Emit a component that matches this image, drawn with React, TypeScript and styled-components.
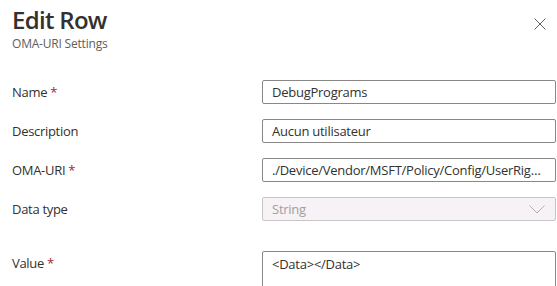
import React from "react"
import styled, { createGlobalStyle } from "styled-components"

const GlobalStyle = createGlobalStyle`
  html, body {
    margin: 0;
    padding: 0;
    background: #ffffff;
    font-family: "Open Sans", "Noto Sans", sans-serif;
    color: #323130;
    overflow: hidden;
  }
`

const App = () => {
  return (
    <Panel>
      <GlobalStyle />
      <Header>
        <div>
          <Title>Edit Row</Title>
          <Subtitle>OMA-URI Settings</Subtitle>
        </div>
        <CloseButton aria-label="Close">
          <svg width="12" height="12" viewBox="0 0 12 12">
            <path d="M0.5 0.5 L11.5 11.5 M11.5 0.5 L0.5 11.5" stroke="#605e5c" strokeWidth="1" />
          </svg>
        </CloseButton>
      </Header>
      <Form>
        <Label>
          Name <Req>*</Req>
        </Label>
        <TextField defaultValue="DebugPrograms" />

        <Label>Description</Label>
        <TextField defaultValue="Aucun utilisateur" />

        <Label>
          OMA-URI <Req>*</Req>
        </Label>
        <TextField defaultValue="./Device/Vendor/MSFT/Policy/Config/UserRights/DebugPrograms" />

        <Label>Data type</Label>
        <Dropdown>
          <span>String</span>
          <svg width="16" height="9" viewBox="0 0 16 9">
            <path d="M0.5 0.5 L8 8 L15.5 0.5" fill="none" stroke="#b3b0ad" strokeWidth="1" />
          </svg>
        </Dropdown>

        <Label $spaced>
          Value <Req>*</Req>
        </Label>
        <ValueArea $spaced defaultValue="<Data></Data>" />
      </Form>
    </Panel>
  )
}

export default App

const Panel = styled.div`
  width: 557px;
  height: 286px;
  box-sizing: border-box;
  padding: 0 1px 0 12px;
  overflow: hidden;
`

const Header = styled.div`
  display: flex;
  justify-content: space-between;
  align-items: flex-start;
  padding-top: 4px;
`

const Title = styled.h1`
  margin: 0;
  font-size: 24px;
  line-height: 32px;
  font-weight: 600;
  letter-spacing: -0.7px;
  color: #323130;
`

const Subtitle = styled.p`
  margin: 0;
  font-size: 12px;
  line-height: 16px;
  letter-spacing: -0.2px;
  color: #605e5c;
`

const CloseButton = styled.button`
  all: unset;
  display: flex;
  margin: 14px 10px 0 0;
`

const Form = styled.div`
  display: grid;
  grid-template-columns: 250px 1fr;
  row-gap: 15px;
  margin-top: 28px;
  align-items: center;
`

const Label = styled.label<{ $spaced?: boolean }>`
  font-size: 13px;
  letter-spacing: -0.3px;
  color: #323130;
  margin-top: ${(p) => (p.$spaced ? "15px" : "0")};
  align-self: ${(p) => (p.$spaced ? "start" : "center")};
  padding-top: ${(p) => (p.$spaced ? "3px" : "0")};
`

const Req = styled.span`
  color: #a4262c;
`

const TextField = styled.input`
  all: unset;
  box-sizing: border-box;
  height: 24px;
  width: 100%;
  border: 1px solid #8a8886;
  border-radius: 2px;
  padding: 0 9px;
  font-family: inherit;
  font-size: 13px;
  letter-spacing: -0.25px;
  color: #323130;
  white-space: nowrap;
  overflow: hidden;
  text-overflow: ellipsis;
`

const Dropdown = styled.div`
  box-sizing: border-box;
  height: 24px;
  display: flex;
  align-items: center;
  justify-content: space-between;
  border: 1px solid #c8c6c4;
  border-radius: 2px;
  background: #f6f2f5;
  padding: 0 10px 0 9px;
  font-size: 13px;
  letter-spacing: -0.25px;
  color: #a19f9d;
`

const ValueArea = styled.textarea<{ $spaced?: boolean }>`
  all: unset;
  box-sizing: border-box;
  height: 60px;
  width: 100%;
  margin-top: ${(p) => (p.$spaced ? "15px" : "0")};
  border: 1px solid #8a8886;
  border-radius: 2px;
  padding: 3px 9px;
  font-family: inherit;
  font-size: 13px;
  letter-spacing: -0.25px;
  word-spacing: 0;
  color: #323130;
  white-space: pre;
`
